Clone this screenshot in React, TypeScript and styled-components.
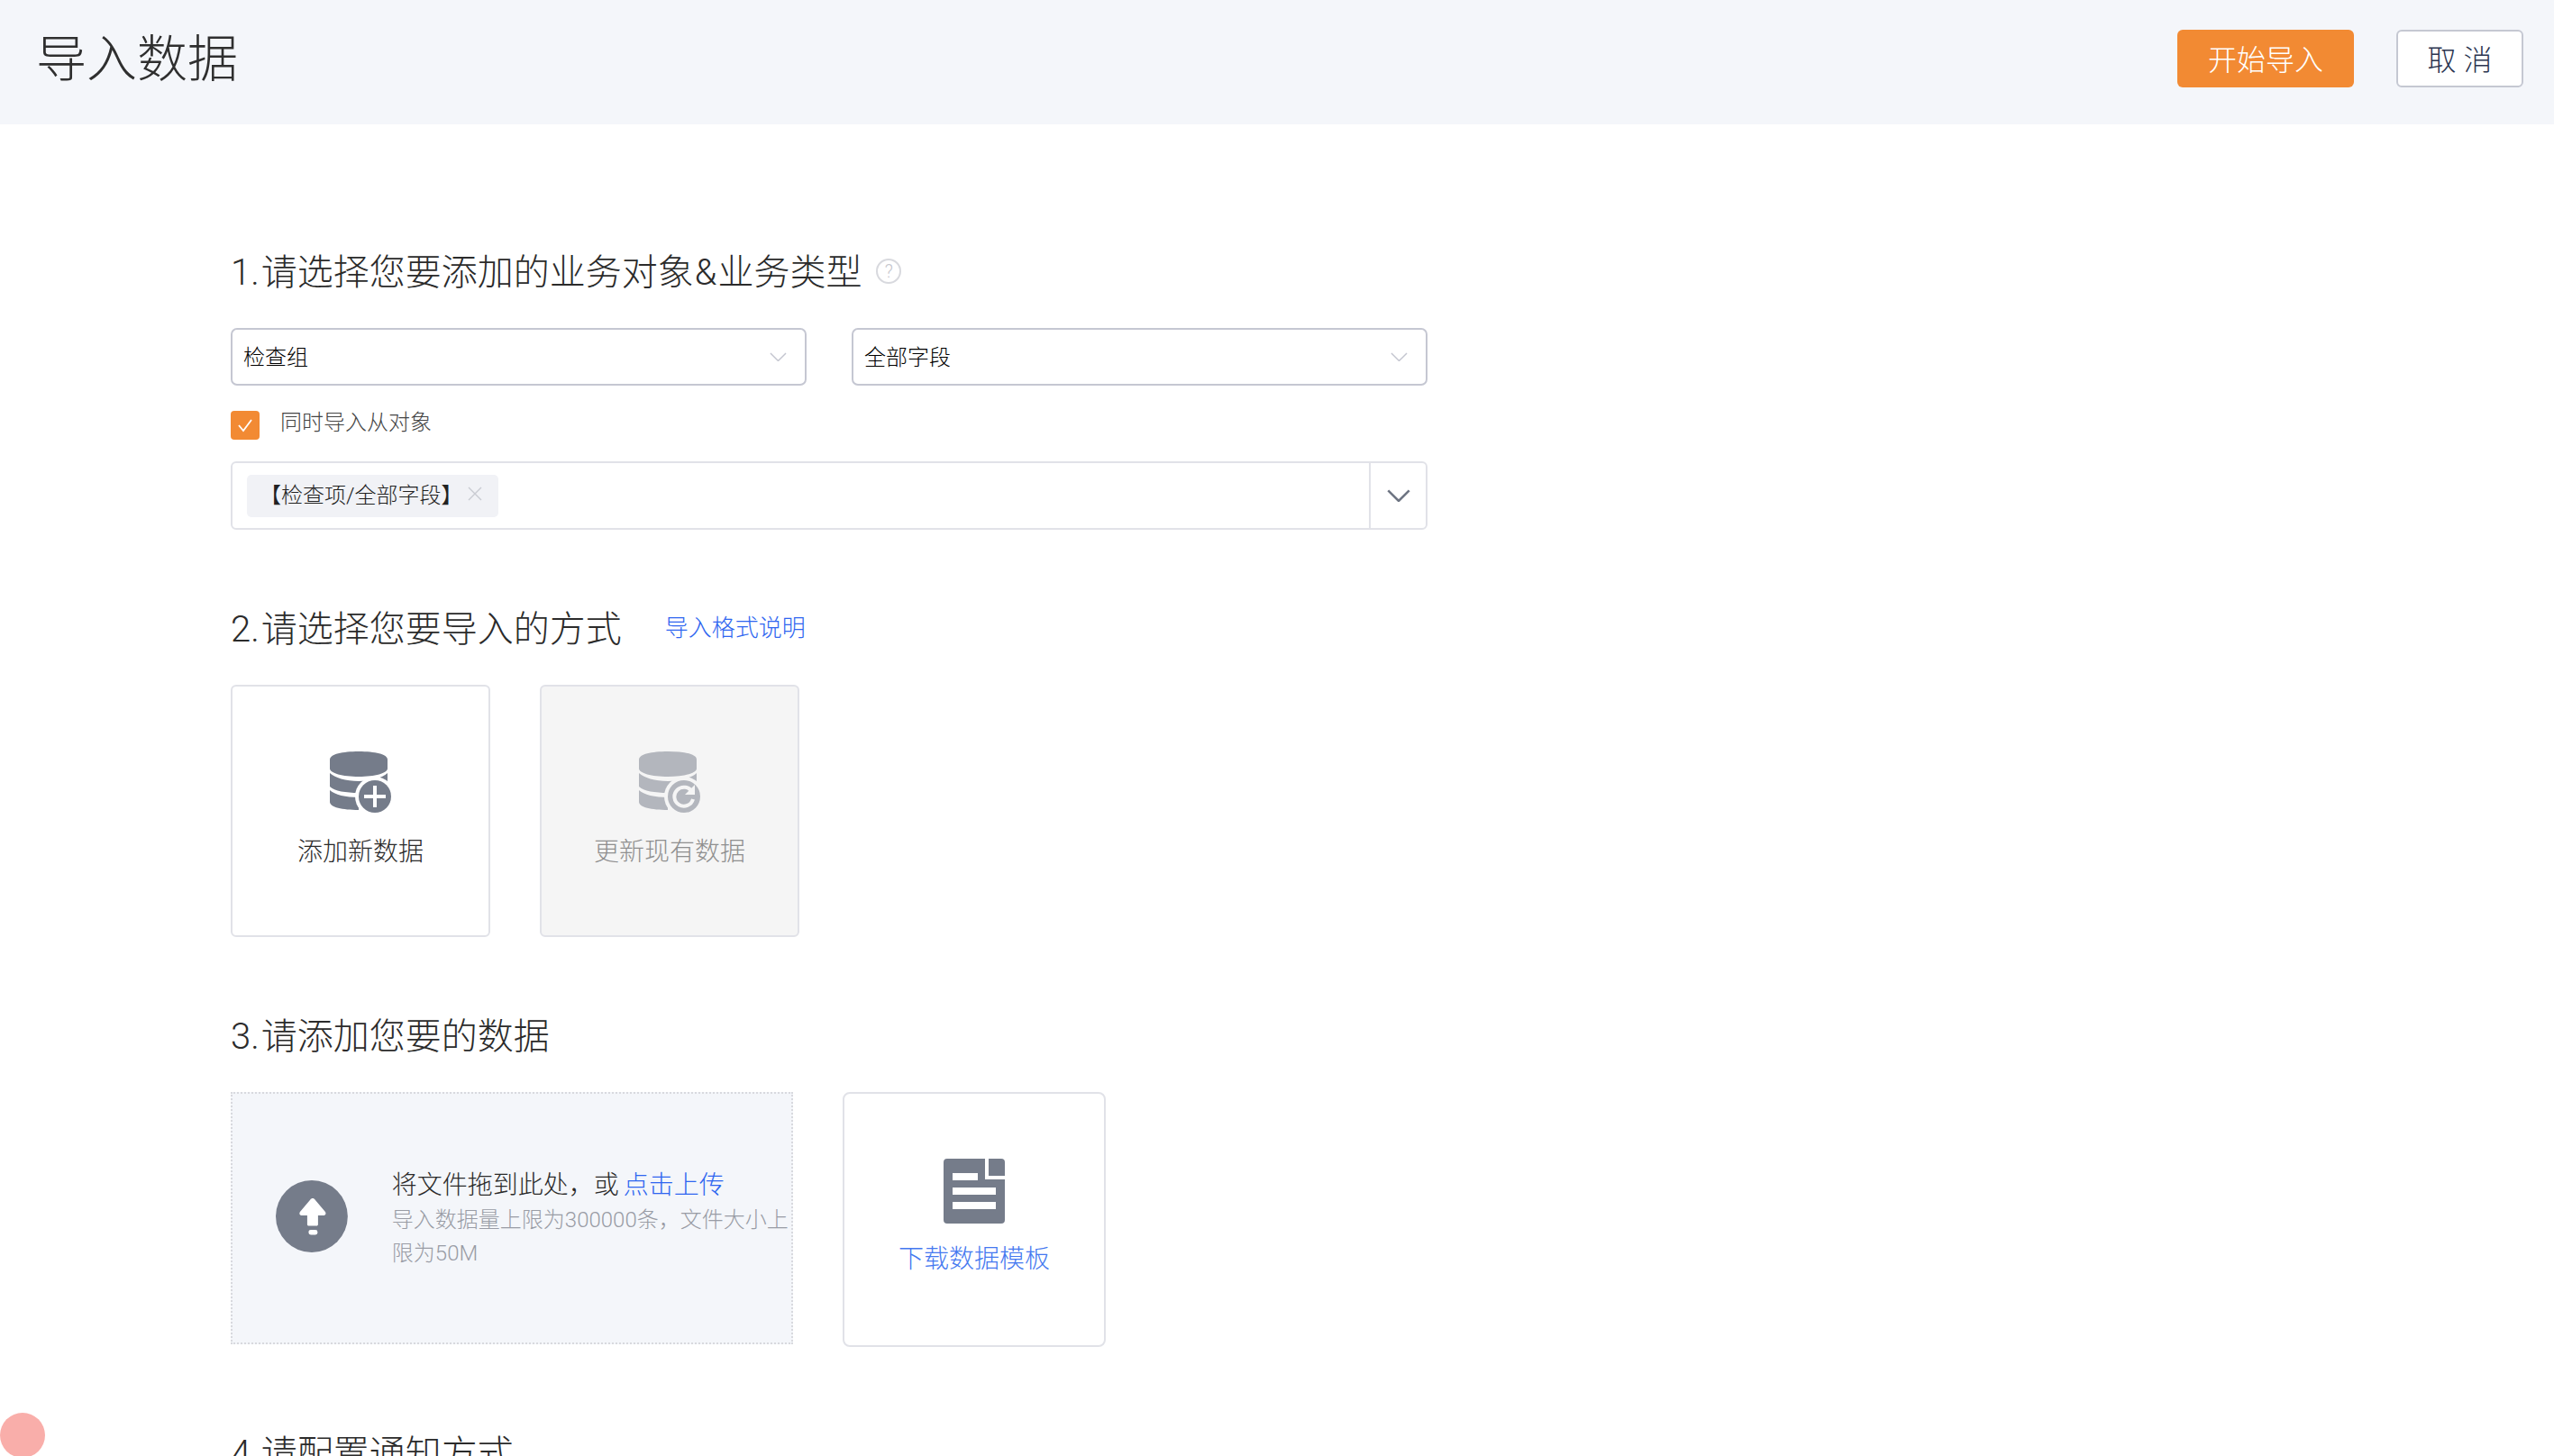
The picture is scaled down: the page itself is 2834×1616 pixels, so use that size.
import React from 'react';
import styled, { createGlobalStyle } from 'styled-components';

const GlobalStyle = createGlobalStyle`
  html, body {
    margin: 0;
    padding: 0;
    height: 1616px;
    overflow: hidden;
    background: #fff;
  }
  * {
    box-sizing: border-box;
  }
  body {
    font-family: Roboto, "Noto Sans CJK SC", sans-serif;
    font-weight: 300;
    color: #2b2b2b;
  }
`;

const Header = styled.header`
  display: flex;
  align-items: center;
  justify-content: space-between;
  height: 138px;
  padding: 0 34px 8px 40px;
  background: #f4f6fa;
`;

const PageTitle = styled.h1`
  margin: 0 0 10px;
  font-size: 56px;
  font-weight: 300;
  color: #2f2f2f;
`;

const HeaderActions = styled.div`
  display: flex;
  gap: 47px;
`;

const Button = styled.button<{ $primary?: boolean }>`
  height: 64px;
  width: ${(p) => (p.$primary ? '196px' : '141px')};
  padding: 0 0 3px;
  font-family: inherit;
  font-weight: 300;
  font-size: 32px;
  border-radius: 6px;
  border: ${(p) => (p.$primary ? 'none' : '2px solid #c5c8d2')};
  background: ${(p) => (p.$primary ? '#f28a33' : '#fff')};
  color: ${(p) => (p.$primary ? '#fff' : '#2c3550')};
`;

const Main = styled.main`
  padding: 135px 0 0 256px;
`;

const Section = styled.section<{ $gap?: number }>`
  margin-bottom: ${(p) => p.$gap ?? 81}px;
`;

const SectionTitle = styled.div`
  display: flex;
  align-items: center;
  height: 56px;
  margin-bottom: 35px;
  padding-bottom: 5px;
  font-size: 40px;
  color: #2b2b2b;
`;

const TitleText = styled.span`
  white-space: nowrap;
`;

const SectionNo = styled.span`
  margin-right: 2px;
`;

const Amp = styled.span`
  margin: 0 1px;
`;

const HelpMark = styled.span`
  display: flex;
  align-items: center;
  justify-content: center;
  width: 28px;
  height: 28px;
  margin: 5px 0 0 16px;
  border: 2px solid #d8d9de;
  border-radius: 50%;
  font-size: 20px;
  color: #c4c5cc;
`;

const TitleLink = styled.a`
  margin-left: 48px;
  font-size: 26px;
  color: #2f66f0;
`;

const SelectRow = styled.div`
  display: flex;
  gap: 50px;
`;

const Select = styled.div`
  display: flex;
  align-items: center;
  justify-content: space-between;
  width: 639px;
  height: 64px;
  padding: 0 20px 0 12px;
  border: 2px solid #c5c7d2;
  border-radius: 7px;
  font-size: 24px;
  color: #000;
`;

const SelectValue = styled.span`
  margin-bottom: 4px;
`;

const CheckRow = styled.div`
  display: flex;
  align-items: center;
  gap: 23px;
  margin: 28px 0 24px;
  font-size: 24px;
  line-height: 31px;
  color: #444;
`;

const CheckBox = styled.span`
  display: flex;
  align-items: center;
  justify-content: center;
  width: 32px;
  height: 32px;
  border-radius: 4px;
  background: #f28a33;
`;

const CheckLabel = styled.span`
  position: relative;
  top: -3px;
`;

const MultiSelect = styled.div`
  display: flex;
  width: 1328px;
  height: 76px;
  border: 2px solid #e1e2e8;
  border-radius: 6px;
`;

const MultiBody = styled.div`
  flex: 1;
  display: flex;
  align-items: center;
  padding-left: 16px;
`;

const Tag = styled.span`
  display: flex;
  align-items: center;
  gap: 5px;
  width: 279px;
  height: 47px;
  padding: 0 0 5px 14px;
  border-radius: 5px;
  background: #f1f2f6;
  font-size: 24px;
  color: #222;
`;

const MultiArrow = styled.div`
  display: flex;
  align-items: center;
  justify-content: center;
  width: 63px;
  border-left: 2px solid #e1e2e8;
`;

const CardRow = styled.div`
  display: flex;
  align-items: flex-start;
  gap: 55px;
`;

const ModeCard = styled.div<{ $disabled?: boolean }>`
  display: flex;
  flex-direction: column;
  align-items: center;
  width: 288px;
  height: 280px;
  padding-top: 72px;
  border: 2px solid #e1e2e8;
  border-radius: 6px;
  background: ${(p) => (p.$disabled ? '#f5f5f5' : '#fff')};
  color: ${(p) => (p.$disabled ? '#8f8f8f' : '#2b2b2b')};
  font-size: 28px;
`;

const CardLabel = styled.div`
  margin-top: 24px;
  line-height: 40px;
`;

const UploadRow = styled.div`
  display: flex;
  align-items: flex-start;
  gap: 55px;
`;

const UploadBox = styled.div`
  display: flex;
  align-items: center;
  gap: 49px;
  width: 624px;
  height: 280px;
  padding-left: 48px;
  border: 2px dotted #d8d9de;
  background: #f4f6fa;
`;

const UploadIcon = styled.svg`
  margin-bottom: 4px;
`;

const UploadText = styled.div`
  width: 444px;
  margin-top: 2px;
`;

const UploadMain = styled.div`
  font-size: 28px;
  line-height: 40px;
  color: #2b2b2b;
`;

const UploadLink = styled.a`
  margin-left: -2px;
  color: #2f66f0;
`;

const UploadHint = styled.div`
  font-size: 24px;
  line-height: 37px;
  color: #999ca5;
`;

const TemplateCard = styled.div`
  display: flex;
  flex-direction: column;
  align-items: center;
  width: 292px;
  height: 283px;
  padding-top: 72px;
  border: 2px solid #e1e2e8;
  border-radius: 8px;
`;

const TemplateLabel = styled.a`
  margin-top: 20px;
  font-size: 28px;
  line-height: 40px;
  color: #4478f0;
`;

const Dot = styled.div`
  position: fixed;
  left: 0;
  top: 1568px;
  width: 50px;
  height: 50px;
  border-radius: 50%;
  background: #f9aeaa;
`;

const Chevron = ({ size = 19, color = '#c3c5cf', width = 1.5 }: { size?: number; color?: string; width?: number }) => (
  <svg width={size} height={size * 0.55} viewBox="0 0 20 11" fill="none">
    <path d="M1 1l9 9 9-9" stroke={color} strokeWidth={width} />
  </svg>
);

const DbIcon = ({ color, ring, children }: { color: string; ring: string; children: React.ReactNode }) => (
  <svg width="68" height="68" viewBox="0 0 68 68">
    <path d="M0 9C0 3 14 0 32 0s32 3 32 9v10c0 5-14 9-32 9S0 24 0 19z" fill={color} />
    <path d="M0 24c5 5 18 9 32 9s27-4 32-9v12c-5 6-18 10-32 10S5 44 0 39z" fill={color} />
    <path d="M0 43c5 5 18 8 32 8v14C14 65 0 62 0 56z" fill={color} />
    <circle cx="50" cy="50" r="22" fill={ring} />
    <circle cx="50" cy="50" r="18" fill={color} />
    {children}
  </svg>
);

export default function App() {
  return (
    <>
      <GlobalStyle />
      <Header>
        <PageTitle>导入数据</PageTitle>
        <HeaderActions>
          <Button $primary>开始导入</Button>
          <Button>取 消</Button>
        </HeaderActions>
      </Header>
      <Main>
        <Section>
          <SectionTitle>
            <TitleText>
              <SectionNo>1.</SectionNo>请选择您要添加的业务对象<Amp>&amp;</Amp>业务类型
            </TitleText>
            <HelpMark>?</HelpMark>
          </SectionTitle>
          <SelectRow>
            <Select>
              <SelectValue>检查组</SelectValue>
              <Chevron />
            </Select>
            <Select>
              <SelectValue>全部字段</SelectValue>
              <Chevron />
            </Select>
          </SelectRow>
          <CheckRow>
            <CheckBox>
              <svg width="18" height="16" viewBox="0 0 18 16" fill="none">
                <path d="M2 8l5 6L16 2" stroke="#fff" strokeWidth="1.8" />
              </svg>
            </CheckBox>
            <CheckLabel>同时导入从对象</CheckLabel>
          </CheckRow>
          <MultiSelect>
            <MultiBody>
              <Tag>
                【检查项/全部字段】
                <svg width="16" height="16" viewBox="0 0 16 16" fill="none">
                  <path d="M1 1l14 14M15 1L1 15" stroke="#c9cbd2" strokeWidth="1.4" />
                </svg>
              </Tag>
            </MultiBody>
            <MultiArrow>
              <Chevron size={26} color="#6e7583" width={2} />
            </MultiArrow>
          </MultiSelect>
        </Section>

        <Section>
          <SectionTitle>
            <TitleText>
              <SectionNo>2.</SectionNo>请选择您要导入的方式
            </TitleText>
            <TitleLink>导入格式说明</TitleLink>
          </SectionTitle>
          <CardRow>
            <ModeCard>
              <DbIcon color="#757c8a" ring="#fff">
                <path d="M50 38v24M38 50h24" stroke="#fff" strokeWidth="4" />
              </DbIcon>
              <CardLabel>添加新数据</CardLabel>
            </ModeCard>
            <ModeCard $disabled>
              <DbIcon color="#b3b6bd" ring="#f5f5f5">
                <path d="M59 45a10.5 10.5 0 1 0 1 8" fill="none" stroke="#f5f5f5" strokeWidth="4" />
                <path d="M62 37v11H51z" fill="#f5f5f5" />
              </DbIcon>
              <CardLabel>更新现有数据</CardLabel>
            </ModeCard>
          </CardRow>
        </Section>

        <Section $gap={89}>
          <SectionTitle>
            <TitleText>
              <SectionNo>3.</SectionNo>请添加您要的数据
            </TitleText>
          </SectionTitle>
          <UploadRow>
            <UploadBox>
              <UploadIcon width="80" height="80" viewBox="0 0 80 80">
                <circle cx="40" cy="40" r="40" fill="#757c8a" />
                <path
                  d="M41 20c1 0 2 .6 2.600 1.400L55 35c1.300 1.800.3 4-1.800 4H47v10c0 1-.8 1.500-1.500 1.500h-9c-.7 0-1.500-.5-1.500-1.500V39h-6.200c-2.100 0-3.100-2.200-1.800-4l11.400-13.600C39 20.600 40 20 41 20z"
                  fill="#fff"
                />
                <rect x="36.500" y="55" width="10" height="5.500" rx="2.500" fill="#fff" />
              </UploadIcon>
              <UploadText>
                <UploadMain>
                  将文件拖到此处，或 <UploadLink>点击上传</UploadLink>
                </UploadMain>
                <UploadHint>导入数据量上限为300000条，文件大小上限为50M</UploadHint>
              </UploadText>
            </UploadBox>
            <TemplateCard>
              <svg width="68" height="72" viewBox="0 0 68 72">
                <path d="M4 0h42v23h22v45a4 4 0 0 1-4 4H4a4 4 0 0 1-4-4V4a4 4 0 0 1 4-4z" fill="#757c8a" />
                <path d="M50 0h14a4 4 0 0 1 4 4v15H50z" fill="#757c8a" />
                <path d="M10 16h28v8H10zM10 32h48v8H10zM10 48h48v8H10z" fill="#fff" />
              </svg>
              <TemplateLabel>下载数据模板</TemplateLabel>
            </TemplateCard>
          </UploadRow>
        </Section>

        <SectionTitle>
          <TitleText>
            <SectionNo>4.</SectionNo>请配置通知方式
          </TitleText>
        </SectionTitle>
      </Main>
      <Dot />
    </>
  );
}
